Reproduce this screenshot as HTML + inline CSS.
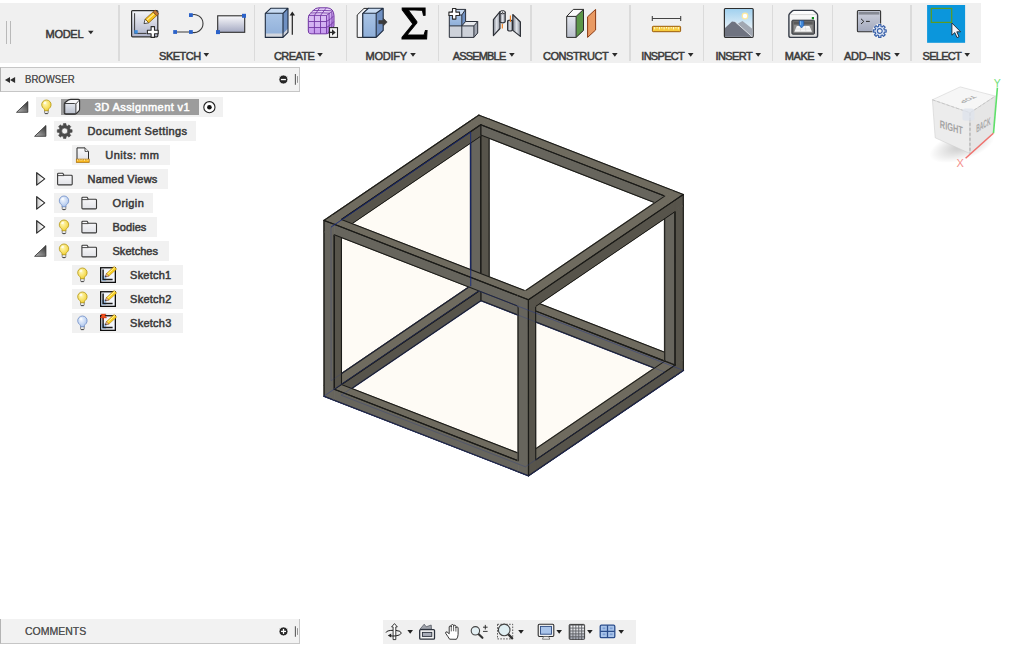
<!DOCTYPE html><html><head><meta charset="utf-8"><title>3D Assignment v1</title><style>
*{box-sizing:border-box;margin:0;padding:0}
html,body{width:1020px;height:648px;overflow:hidden;background:#fff}
body{position:relative;font-family:"Liberation Sans",sans-serif;color:#333}
.abs{position:absolute}
.toolbar{position:absolute;left:0;top:3px;width:981px;height:59.7px;background:#f0f0f0}
.sep{position:absolute;top:5px;width:1.6px;height:55.5px;background:#dbdbdb}
.tl{position:absolute;top:49.8px;font-size:11px;font-weight:normal;-webkit-text-stroke:0.5px #3a3a3a;color:#3a3a3a;white-space:nowrap;line-height:12px}
.ar{position:absolute;width:0;height:0;border-left:2.8px solid transparent;border-right:2.8px solid transparent;border-top:3.8px solid #2a2a2a}
.panelhdr{position:absolute;left:0;width:299.5px;background:#f2f2f2;border:1px solid #c6c6c6;border-left-color:#b4b4b4;font-size:11px;color:#555;line-height:12px;white-space:nowrap}
.panelhdr span{transform-origin:0 50%;text-shadow:0 0 0.4px #555}
.row{position:absolute;height:19.55px;background:#f1f1f1}
.row span{position:absolute;top:4.15px;font-size:11px;font-weight:normal;-webkit-text-stroke:0.5px #3a3a3a;color:#3a3a3a;white-space:nowrap;line-height:12px}
.model{position:absolute;left:0;top:0}
</style></head><body>
<svg class="model" width="1020" height="648" viewBox="0 0 1020 648"><g stroke="#1b1b18" stroke-width="1.1" stroke-linecap="round" stroke-linejoin="round"><polygon points="324.21,396.34 528.52,475.67 683.36,370.39 479.05,291.05" fill="#fefbf5"/>
<polygon points="324.21,396.34 479.05,291.05 478.96,115.14 324.12,220.42" fill="#fefbf5"/>
<polygon points="324.21,396.34 528.52,475.67 683.36,370.39 479.05,291.05" fill="none" stroke="#1f3391" stroke-width="1.6"/>
<polygon points="341.51,395.36 525.41,466.77 664.75,372.02 480.84,300.61" fill="none" stroke="#1f3391" stroke-width="1.6"/>
<polygon points="331.41,380.54 470.75,285.79 470.67,132.13 331.33,226.88" fill="none" stroke="#1f3391" stroke-width="1.6"/>

<polygon points="470.75,285.79 480.84,289.71 480.76,136.05 470.67,132.13" fill="#67655d" stroke="#67655d" stroke-width="1"/><polygon points="480.84,289.71 489.14,284.06 489.06,130.4 480.76,136.05" fill="#57544b" stroke="#57544b" stroke-width="1"/><line x1="470.75" y1="285.79" x2="480.84" y2="289.71"/><line x1="480.84" y1="289.71" x2="480.76" y2="136.05"/><line x1="480.76" y1="136.05" x2="470.67" y2="132.13"/><line x1="470.67" y1="132.13" x2="470.75" y2="285.79"/><line x1="480.84" y1="289.71" x2="489.14" y2="284.06"/><line x1="489.14" y1="284.06" x2="489.06" y2="130.4"/><line x1="480.76" y1="136.05" x2="480.84" y2="289.71"/>
<polygon points="480.84,289.71 664.74,361.12 673.04,355.47 489.14,284.06" fill="#6f6b5f" stroke="#6f6b5f" stroke-width="1"/><polygon points="480.84,300.61 664.75,372.02 664.74,361.12 480.84,289.71" fill="#67655d" stroke="#67655d" stroke-width="1"/><line x1="480.84" y1="289.71" x2="664.74" y2="361.12"/><line x1="664.74" y1="361.12" x2="673.04" y2="355.47"/><line x1="673.04" y1="355.47" x2="489.14" y2="284.06"/><line x1="489.14" y1="284.06" x2="480.84" y2="289.71"/><line x1="480.84" y1="300.61" x2="664.75" y2="372.02"/><line x1="664.75" y1="372.02" x2="664.74" y2="361.12"/><line x1="664.74" y1="361.12" x2="480.84" y2="289.71"/><line x1="480.84" y1="289.71" x2="480.84" y2="300.61"/>
<polygon points="331.41,380.54 341.5,384.45 480.84,289.71 470.75,285.79" fill="#6f6b5f" stroke="#6f6b5f" stroke-width="1"/><polygon points="341.51,395.36 480.84,300.61 480.84,289.71 341.5,384.45" fill="#57544b" stroke="#57544b" stroke-width="1"/><line x1="331.41" y1="380.54" x2="341.5" y2="384.45"/><line x1="341.5" y1="384.45" x2="480.84" y2="289.71"/><line x1="480.84" y1="289.71" x2="470.75" y2="285.79"/><line x1="470.75" y1="285.79" x2="331.41" y2="380.54"/><line x1="341.51" y1="395.36" x2="480.84" y2="300.61"/><line x1="480.84" y1="300.61" x2="480.84" y2="289.71"/><line x1="480.84" y1="289.71" x2="341.5" y2="384.45"/><line x1="341.5" y1="384.45" x2="341.51" y2="395.36"/>
<polygon points="480.76,136.05 489.06,130.4 489.06,129.45 480.76,135.1" fill="#57544b" stroke="#57544b" stroke-width="1"/><line x1="489.06" y1="130.4" x2="489.06" y2="129.45"/><line x1="489.06" y1="129.45" x2="480.76" y2="135.1"/>
<polygon points="470.66,120.78 480.76,124.7 489.06,119.06 478.96,115.14" fill="#6f6b5f" stroke="#6f6b5f" stroke-width="1"/><line x1="489.06" y1="119.06" x2="478.96" y2="115.14"/><line x1="478.96" y1="115.14" x2="470.66" y2="120.78"/>
<polygon points="324.21,396.34 334.31,400.26 334.3,389.35 324.21,385.43" fill="#67655d" stroke="#67655d" stroke-width="1"/><line x1="324.21" y1="396.34" x2="334.31" y2="400.26"/><line x1="324.21" y1="385.43" x2="324.21" y2="396.34"/>
<polygon points="675.06,376.03 683.36,370.39 683.36,359.48 675.06,365.12" fill="#57544b" stroke="#57544b" stroke-width="1"/><line x1="675.06" y1="376.03" x2="683.36" y2="370.39"/><line x1="683.36" y1="370.39" x2="683.36" y2="359.48"/>
<polygon points="341.42,230.79 480.76,136.05 480.76,135.1 341.42,229.84" fill="#57544b" stroke="#57544b" stroke-width="1"/><line x1="341.42" y1="230.79" x2="480.76" y2="136.05"/>
<polygon points="480.76,124.7 664.66,196.11 672.96,190.47 489.06,119.06" fill="#6f6b5f" stroke="#6f6b5f" stroke-width="1"/><polygon points="480.76,135.1 664.66,206.51 664.66,196.11 480.76,124.7" fill="#67655d" stroke="#67655d" stroke-width="1"/><line x1="480.76" y1="124.7" x2="664.66" y2="196.11"/><line x1="672.96" y1="190.47" x2="489.06" y2="119.06"/><line x1="480.76" y1="135.1" x2="664.66" y2="206.51"/><line x1="664.66" y1="206.51" x2="664.66" y2="196.11"/><line x1="664.66" y1="196.11" x2="480.76" y2="124.7"/><line x1="480.76" y1="124.7" x2="480.76" y2="135.1"/>
<polygon points="331.32,215.53 341.42,219.45 480.76,124.7 470.66,120.78" fill="#6f6b5f" stroke="#6f6b5f" stroke-width="1"/><polygon points="341.42,229.84 480.76,135.1 480.76,124.7 341.42,219.45" fill="#57544b" stroke="#57544b" stroke-width="1"/><line x1="341.42" y1="219.45" x2="480.76" y2="124.7"/><line x1="470.66" y1="120.78" x2="331.32" y2="215.53"/><line x1="480.76" y1="135.1" x2="480.76" y2="124.7"/><line x1="480.76" y1="124.7" x2="341.42" y2="219.45"/><line x1="341.42" y1="219.45" x2="341.42" y2="229.84"/>
<polygon points="324.21,385.43 334.3,389.35 334.22,235.69 324.13,231.77" fill="#67655d" stroke="#67655d" stroke-width="1"/><polygon points="334.3,389.35 341.5,384.45 341.42,230.79 334.22,235.69" fill="#57544b" stroke="#57544b" stroke-width="1"/><line x1="334.3" y1="389.35" x2="334.22" y2="235.69"/><line x1="324.13" y1="231.77" x2="324.21" y2="385.43"/><line x1="334.3" y1="389.35" x2="341.5" y2="384.45"/><line x1="341.5" y1="384.45" x2="341.42" y2="230.79"/><line x1="334.22" y1="235.69" x2="334.3" y2="389.35"/>
<polygon points="664.74,361.12 675.06,365.12 674.98,211.46 664.66,207.46" fill="#67655d" stroke="#67655d" stroke-width="1"/><polygon points="675.06,365.12 683.36,359.48 683.28,205.82 674.98,211.46" fill="#57544b" stroke="#57544b" stroke-width="1"/><line x1="664.74" y1="361.12" x2="675.06" y2="365.12"/><line x1="675.06" y1="365.12" x2="674.98" y2="211.46"/><line x1="674.98" y1="211.46" x2="664.66" y2="207.46"/><line x1="664.66" y1="207.46" x2="664.74" y2="361.12"/><line x1="683.36" y1="359.48" x2="683.28" y2="205.82"/><line x1="674.98" y1="211.46" x2="675.06" y2="365.12"/>
<polygon points="334.3,389.35 518.2,460.76 525.4,455.87 341.5,384.45" fill="#6f6b5f" stroke="#6f6b5f" stroke-width="1"/><polygon points="334.31,400.26 518.21,471.67 518.2,460.76 334.3,389.35" fill="#67655d" stroke="#67655d" stroke-width="1"/><line x1="334.3" y1="389.35" x2="518.2" y2="460.76"/><line x1="518.2" y1="460.76" x2="525.4" y2="455.87"/><line x1="525.4" y1="455.87" x2="341.5" y2="384.45"/><line x1="341.5" y1="384.45" x2="334.3" y2="389.35"/><line x1="334.31" y1="400.26" x2="518.21" y2="471.67"/><line x1="518.2" y1="460.76" x2="334.3" y2="389.35"/>
<polygon points="525.4,455.87 535.72,459.87 675.06,365.12 664.74,361.12" fill="#6f6b5f" stroke="#6f6b5f" stroke-width="1"/><polygon points="535.72,470.78 675.06,376.03 675.06,365.12 535.72,459.87" fill="#57544b" stroke="#57544b" stroke-width="1"/><line x1="525.4" y1="455.87" x2="535.72" y2="459.87"/><line x1="535.72" y1="459.87" x2="675.06" y2="365.12"/><line x1="675.06" y1="365.12" x2="664.74" y2="361.12"/><line x1="664.74" y1="361.12" x2="525.4" y2="455.87"/><line x1="535.72" y1="470.78" x2="675.06" y2="376.03"/><line x1="675.06" y1="365.12" x2="535.72" y2="459.87"/>
<polygon points="324.13,231.77 334.22,235.69 334.22,234.74 324.13,230.82" fill="#67655d" stroke="#67655d" stroke-width="1"/><polygon points="334.22,235.69 341.42,230.79 341.42,229.84 334.22,234.74" fill="#57544b" stroke="#57544b" stroke-width="1"/><line x1="334.22" y1="235.69" x2="334.22" y2="234.74"/><line x1="324.13" y1="230.82" x2="324.13" y2="231.77"/><line x1="341.42" y1="229.84" x2="334.22" y2="234.74"/><line x1="334.22" y1="234.74" x2="334.22" y2="235.69"/>
<polygon points="674.98,211.46 683.28,205.82 683.28,204.87 674.98,210.51" fill="#57544b" stroke="#57544b" stroke-width="1"/><line x1="683.28" y1="205.82" x2="683.28" y2="204.87"/>
<polygon points="324.12,220.42 334.22,224.34 341.42,219.45 331.32,215.53" fill="#6f6b5f" stroke="#6f6b5f" stroke-width="1"/><polygon points="324.13,230.82 334.22,234.74 334.22,224.34 324.12,220.42" fill="#67655d" stroke="#67655d" stroke-width="1"/><line x1="324.12" y1="220.42" x2="334.22" y2="224.34"/><line x1="331.32" y1="215.53" x2="324.12" y2="220.42"/><line x1="334.22" y1="224.34" x2="324.12" y2="220.42"/><line x1="324.12" y1="220.42" x2="324.13" y2="230.82"/>
<polygon points="664.66,196.11 674.98,200.12 683.27,194.47 672.96,190.47" fill="#6f6b5f" stroke="#6f6b5f" stroke-width="1"/><polygon points="674.98,210.51 683.28,204.87 683.27,194.47 674.98,200.12" fill="#57544b" stroke="#57544b" stroke-width="1"/><line x1="674.98" y1="200.12" x2="683.27" y2="194.47"/><line x1="683.27" y1="194.47" x2="672.96" y2="190.47"/><line x1="683.28" y1="204.87" x2="683.27" y2="194.47"/><line x1="683.27" y1="194.47" x2="674.98" y2="200.12"/>
<polygon points="518.21,471.67 528.52,475.67 528.52,464.77 518.2,460.76" fill="#67655d" stroke="#67655d" stroke-width="1"/><polygon points="528.52,475.67 535.72,470.78 535.72,459.87 528.52,464.77" fill="#57544b" stroke="#57544b" stroke-width="1"/><line x1="518.21" y1="471.67" x2="528.52" y2="475.67"/><line x1="528.52" y1="475.67" x2="528.52" y2="464.77"/><line x1="528.52" y1="475.67" x2="535.72" y2="470.78"/><line x1="528.52" y1="464.77" x2="528.52" y2="475.67"/>
<polygon points="535.64,306.21 674.98,211.46 674.98,210.51 535.64,305.26" fill="#57544b" stroke="#57544b" stroke-width="1"/><line x1="535.64" y1="306.21" x2="674.98" y2="211.46"/>
<polygon points="334.22,224.34 518.12,295.76 525.32,290.86 341.42,219.45" fill="#6f6b5f" stroke="#6f6b5f" stroke-width="1"/><polygon points="334.22,234.74 518.12,306.15 518.12,295.76 334.22,224.34" fill="#67655d" stroke="#67655d" stroke-width="1"/><line x1="334.22" y1="224.34" x2="518.12" y2="295.76"/><line x1="525.32" y1="290.86" x2="341.42" y2="219.45"/><line x1="334.22" y1="234.74" x2="518.12" y2="306.15"/><line x1="518.12" y1="295.76" x2="334.22" y2="224.34"/>
<polygon points="525.32,290.86 535.64,294.87 674.98,200.12 664.66,196.11" fill="#6f6b5f" stroke="#6f6b5f" stroke-width="1"/><polygon points="535.64,305.26 674.98,210.51 674.98,200.12 535.64,294.87" fill="#57544b" stroke="#57544b" stroke-width="1"/><line x1="535.64" y1="294.87" x2="674.98" y2="200.12"/><line x1="664.66" y1="196.11" x2="525.32" y2="290.86"/><line x1="674.98" y1="200.12" x2="535.64" y2="294.87"/>
<polygon points="518.2,460.76 528.52,464.77 528.44,311.11 518.13,307.1" fill="#67655d" stroke="#67655d" stroke-width="1"/><polygon points="528.52,464.77 535.72,459.87 535.64,306.21 528.44,311.11" fill="#57544b" stroke="#57544b" stroke-width="1"/><line x1="528.52" y1="464.77" x2="528.44" y2="311.11"/><line x1="518.13" y1="307.1" x2="518.2" y2="460.76"/><line x1="535.72" y1="459.87" x2="535.64" y2="306.21"/><line x1="528.44" y1="311.11" x2="528.52" y2="464.77"/>
<polygon points="518.13,307.1 528.44,311.11 528.44,310.16 518.12,306.15" fill="#67655d" stroke="#67655d" stroke-width="1"/><polygon points="528.44,311.11 535.64,306.21 535.64,305.26 528.44,310.16" fill="#57544b" stroke="#57544b" stroke-width="1"/><line x1="528.44" y1="311.11" x2="528.44" y2="310.16"/><line x1="518.12" y1="306.15" x2="518.13" y2="307.1"/><line x1="528.44" y1="310.16" x2="528.44" y2="311.11"/>
<polygon points="518.12,295.76 528.44,299.76 535.64,294.87 525.32,290.86" fill="#6f6b5f" stroke="#6f6b5f" stroke-width="1"/><polygon points="518.12,306.15 528.44,310.16 528.44,299.76 518.12,295.76" fill="#67655d" stroke="#67655d" stroke-width="1"/><polygon points="528.44,310.16 535.64,305.26 535.64,294.87 528.44,299.76" fill="#57544b" stroke="#57544b" stroke-width="1"/><line x1="518.12" y1="295.76" x2="528.44" y2="299.76"/><line x1="528.44" y1="299.76" x2="535.64" y2="294.87"/><line x1="528.44" y1="310.16" x2="528.44" y2="299.76"/><line x1="528.44" y1="299.76" x2="518.12" y2="295.76"/><line x1="535.64" y1="294.87" x2="528.44" y2="299.76"/><line x1="528.44" y1="299.76" x2="528.44" y2="310.16"/>
<polygon points="341.51,395.36 525.41,466.77 664.75,372.02 480.84,300.61" fill="none" stroke="#1f3391" stroke-width="0.9" opacity="0.3"/>
<polygon points="331.41,380.54 470.75,285.79 470.67,132.13 331.33,226.88" fill="none" stroke="#1f3391" stroke-width="0.9" opacity="0.25"/>
<polygon points="324.21,396.34 528.52,475.67 683.36,370.39 479.05,291.05" fill="none" stroke="#1f3391" stroke-width="0.9" opacity="0.45"/>
<polyline points="331.33,226.88 470.67,132.13 470.75,285.79" fill="none" stroke="#12267c" stroke-width="1" opacity="0.75"/></g></svg>
<div class="toolbar"></div>
<div class="abs" style="left:6px;top:21px;width:1px;height:23px;background:#b9b9b9"></div><div class="abs" style="left:10.3px;top:21px;width:1px;height:23px;background:#b9b9b9"></div>
<div class="sep" style="left:118.2px"></div>
<div class="sep" style="left:253.6px"></div>
<div class="sep" style="left:345.8px"></div>
<div class="sep" style="left:437.8px"></div>
<div class="sep" style="left:530.4px"></div>
<div class="sep" style="left:629.4px"></div>
<div class="sep" style="left:702.8px"></div>
<div class="sep" style="left:771.8px"></div>
<div class="sep" style="left:831.6px"></div>
<div class="sep" style="left:910.2px"></div>
<div class="tl" style="left:45.5px;top:28px;letter-spacing:-0.263px">MODEL</div>
<div class="tl" style="left:159.1px;top:49.8px;letter-spacing:-0.519px">SKETCH</div>
<div class="tl" style="left:274px;top:49.8px;letter-spacing:-0.585px">CREATE</div>
<div class="tl" style="left:365.5px;top:49.8px;letter-spacing:-0.246px">MODIFY</div>
<div class="tl" style="left:452.8px;top:49.8px;letter-spacing:-0.839px">ASSEMBLE</div>
<div class="tl" style="left:542.9px;top:49.8px;letter-spacing:-0.406px">CONSTRUCT</div>
<div class="tl" style="left:641.3px;top:49.8px;letter-spacing:-0.711px">INSPECT</div>
<div class="tl" style="left:715.6px;top:49.8px;letter-spacing:-0.625px">INSERT</div>
<div class="tl" style="left:784.7px;top:49.8px;letter-spacing:-0.394px">MAKE</div>
<div class="tl" style="left:843.9px;top:49.8px;letter-spacing:-0.157px">ADD–INS</div>
<div class="tl" style="left:922.6px;top:49.8px;letter-spacing:-0.734px">SELECT</div>
<svg class="abs" style="left:0;top:0" width="1020" height="70" viewBox="0 0 1020 70"><g fill="#2a2a2a"><polygon points="88,30.7 93.6,30.7 90.8,34.3"/><polygon points="203.5,53.1 209.1,53.1 206.3,56.7"/><polygon points="317.2,53.1 322.8,53.1 320,56.7"/><polygon points="410.2,53.1 415.8,53.1 413,56.7"/><polygon points="509.1,53.1 514.7,53.1 511.9,56.7"/><polygon points="612,53.1 617.6,53.1 614.8,56.7"/><polygon points="687.9,53.1 693.5,53.1 690.7,56.7"/><polygon points="755.4,53.1 761,53.1 758.2,56.7"/><polygon points="817.4,53.1 823,53.1 820.2,56.7"/><polygon points="894.2,53.1 899.8,53.1 897,56.7"/><polygon points="964.4,53.1 970,53.1 967.2,56.7"/></g></svg>
<svg class="abs" style="left:0;top:0" width="1020" height="648" viewBox="0 0 1020 648" ><defs>
<linearGradient id="gSk" x1="0" y1="0" x2="0" y2="1"><stop offset="0" stop-color="#f4f5f9"/><stop offset="1" stop-color="#aeb3c9"/></linearGradient>
<linearGradient id="gRc" x1="0" y1="0" x2="0" y2="1"><stop offset="0" stop-color="#fafafc"/><stop offset="1" stop-color="#a4a9c2"/></linearGradient>
<linearGradient id="gBl" x1="0" y1="0" x2="0" y2="1"><stop offset="0" stop-color="#a9c4e6"/><stop offset="1" stop-color="#8eaed8"/></linearGradient>
<linearGradient id="gGr" x1="0" y1="0" x2="0" y2="1"><stop offset="0" stop-color="#e4e7ee"/><stop offset="1" stop-color="#b9bfcc"/></linearGradient>
<linearGradient id="gPl" x1="0" y1="0" x2="1" y2="0"><stop offset="0" stop-color="#7f848f"/><stop offset="0.5" stop-color="#e3e6ec"/><stop offset="1" stop-color="#8a8f9a"/></linearGradient>
<linearGradient id="gSky" x1="0" y1="0" x2="0" y2="1"><stop offset="0" stop-color="#9fd0ef"/><stop offset="0.7" stop-color="#e6f1f8"/><stop offset="1" stop-color="#f2f6f9"/></linearGradient>
<linearGradient id="gWin" x1="0" y1="0" x2="0" y2="1"><stop offset="0" stop-color="#cdd1dc"/><stop offset="1" stop-color="#a3a9bd"/></linearGradient>
<linearGradient id="gPr" x1="0" y1="0" x2="0" y2="1"><stop offset="0" stop-color="#ffffff"/><stop offset="1" stop-color="#dcdcdc"/></linearGradient>
<linearGradient id="gPu" x1="0" y1="0" x2="0" y2="1"><stop offset="0" stop-color="#d9bdf3"/><stop offset="1" stop-color="#b57be8"/></linearGradient>
<linearGradient id="gTc" x1="0" y1="0" x2="1" y2="0"><stop offset="0" stop-color="#c4c4c4"/><stop offset="0.7" stop-color="#fff"/></linearGradient>
<linearGradient id="gFo" x1="0" y1="0" x2="0" y2="1"><stop offset="0" stop-color="#fbfbfc"/><stop offset="1" stop-color="#e2e3e8"/></linearGradient>
<radialGradient id="gBy" cx="0.4" cy="0.35" r="0.7"><stop offset="0" stop-color="#fff9b8"/><stop offset="1" stop-color="#f2cf2e"/></radialGradient>
<radialGradient id="gBb" cx="0.4" cy="0.35" r="0.7"><stop offset="0" stop-color="#f2f7ff"/><stop offset="1" stop-color="#a9c3ec"/></radialGradient>
<linearGradient id="gTri" x1="0" y1="1" x2="1" y2="0"><stop offset="0" stop-color="#bdbdbd"/><stop offset="1" stop-color="#2e2e2e"/></linearGradient>
<radialGradient id="gSh" cx="0.5" cy="0.5" r="0.5"><stop offset="0" stop-color="#000" stop-opacity="0.22"/><stop offset="1" stop-color="#000" stop-opacity="0"/></radialGradient>
</defs><rect x="131.6" y="10.6" width="26.2" height="26.2" rx="1" fill="url(#gSk)" stroke="#2e2e2e" stroke-width="1.2"/>
<path d="M134.6 13.2V33.4H146.5" fill="none" stroke="#3a3a3a" stroke-width="1"/>
<rect x="134.3" y="30.2" width="3.4" height="3.4" fill="#3b8de0"/>
<g transform="translate(144,23.6) rotate(-42)"><polygon points="0,0 4,-2.6 4,2.6" fill="#fff" stroke="#333" stroke-width="0.8"/><rect x="4" y="-2.6" width="10.6" height="5.2" fill="#f6c21c" stroke="#8a5a0a" stroke-width="0.7"/><rect x="14.6" y="-2.6" width="2.8" height="5.2" fill="#c47a3a" stroke="#7a4a1a" stroke-width="0.7"/><line x1="4.5" y1="-0.6" x2="14" y2="-0.6" stroke="#fff3a8" stroke-width="1"/></g>
<polygon points="151.1,26.6 154.5,26.6 154.5,30.3 158.2,30.3 158.2,33.7 154.5,33.7 154.5,37.4 151.1,37.4 151.1,33.7 147.4,33.7 147.4,30.3 151.1,30.3" fill="#fff" stroke="#2a2a2a" stroke-width="1.1" stroke-linejoin="round"/>
<path d="M175.1 32H190.9A9 9 0 1 0 190.9 15.1" fill="none" stroke="#3a3a3a" stroke-width="1.1"/>
<rect x="173.2" y="30.1" width="3.8" height="3.8" fill="#2b62c9"/><rect x="189" y="30.1" width="3.8" height="3.8" fill="#2b62c9"/><rect x="189" y="13.2" width="3.8" height="3.8" fill="#2b62c9"/>
<rect x="217.7" y="15.8" width="27" height="16.5" fill="url(#gRc)" stroke="#2e2e2e" stroke-width="1.1"/>
<rect x="242" y="13.8" width="4" height="4" fill="#2b62c9"/><rect x="216" y="30.1" width="4" height="4" fill="#2b62c9"/>
<polygon points="265.3,13.3 271,8.2 288,8.2 283,13.3" fill="#c9dcf3"/>
<polygon points="283,13.3 288,8.2 288,32.3 283,37.4" fill="#6f90c2"/>
<rect x="265.3" y="13.3" width="17.7" height="24.1" fill="url(#gBl)"/>
<polygon points="265.3,33.6 283,33.6 288,28.4 288,32.3 283,37.4 265.3,37.4" fill="#d2d6de"/>
<path d="M265.3 13.3L271 8.2H288V32.3L283 37.4H265.3Z M265.3 13.3H283V37.4 M283 13.3L288 8.2" fill="none" stroke="#1f2c40" stroke-width="1.1" stroke-linejoin="round"/>
<path d="M292.3 34.8V13.5" stroke="#222" stroke-width="1.2" fill="none"/><polygon points="292.3,11.6 289.6,15.6 295,15.6" fill="#222"/>
<g><path d="M308.3 31V18.5Q308.3 15.5 310.2 13.6L313.8 10Q315.6 7.9 319 7.8H327Q333.6 8.2 334 15.5V25.5Q333.8 29.6 330.6 31.8L328.4 33.2Q327.4 33.8 326 33.8H311Q308.3 33.8 308.3 31Z" fill="url(#gPu)" stroke="#6f35a0" stroke-width="1"/><rect x="309" y="16.1" width="5.1" height="5.1" fill="#ddc3f6" opacity="0.85"/><rect x="309" y="22.1" width="5.1" height="5.1" fill="#ddc3f6" opacity="0.65"/><rect x="309" y="28.1" width="5.1" height="5.1" fill="#ddc3f6" opacity="0.45"/><rect x="315.05" y="16.1" width="5.1" height="5.1" fill="#ddc3f6" opacity="0.85"/><rect x="315.05" y="22.1" width="5.1" height="5.1" fill="#ddc3f6" opacity="0.65"/><rect x="315.05" y="28.1" width="5.1" height="5.1" fill="#ddc3f6" opacity="0.45"/><rect x="321.1" y="16.1" width="5.1" height="5.1" fill="#ddc3f6" opacity="0.85"/><rect x="321.1" y="22.1" width="5.1" height="5.1" fill="#ddc3f6" opacity="0.65"/><rect x="321.1" y="28.1" width="5.1" height="5.1" fill="#ddc3f6" opacity="0.45"/><path d="M309.6 14.6L313.6 10.4Q315.4 8.7 318 8.7H327.2Q331.4 9 332.6 12.2L326.8 15.2Z" fill="#ecdcfb" opacity="0.8"/><path d="M308.6 15.4H326.5V33.4 M308.6 21.5H326.5 M308.6 27.5H326.5 M314.4 15.4V33.6 M320.5 15.4V33.6 M326.5 15.4L332.8 11 M326.5 21.5Q331 19 333.6 16 M326.5 27.5Q331.5 25 333.8 21.6 M314.4 15.4L319.4 8.2 M320.5 15.4L326 8.2 M310.4 13Q320 12.4 330 13.2 M312.6 10.6Q321 10 331.6 10.8 M329 13.6Q329.6 24 329 32.4 M331.8 11.6Q332.4 20 331.6 30.6" fill="none" stroke="#6f35a0" stroke-width="0.85"/></g>
<rect x="329.5" y="27.6" width="8" height="9.8" fill="#f4f4f4" stroke="#2e2e2e" stroke-width="1.1"/><path d="M328.6 32.4H333" stroke="#2a2a2a" stroke-width="1.3"/><polygon points="332,29.3 335.7,32.4 332,35.6" fill="#2a2a2a"/>
<polygon points="357.2,15 364,8.4 368.6,8.4 362.8,13.3 362.8,37.4 357.2,37.4" fill="#f4f5f8" stroke="#2a2a2a" stroke-width="1" stroke-linejoin="round"/>
<polygon points="362.8,13.3 368.6,8.2 383.2,8.2 376.2,13.3" fill="#c9dcf3"/>
<polygon points="376.2,13.3 383.2,8.2 383.2,30.4 376.2,37.4" fill="#6f90c2"/>
<rect x="362.8" y="13.3" width="13.4" height="24.1" fill="url(#gBl)"/>
<path d="M362.8 13.3L368.6 8.2H383.2V30.4L376.2 37.4H362.8Z M362.8 13.3H376.2V37.4 M376.2 13.3L383.2 8.2" fill="none" stroke="#1f2c40" stroke-width="1.1" stroke-linejoin="round"/>
<path d="M378.8 20.5H383.3V18.3L387.2 22.1L383.3 25.9V23.7H378.8Z" fill="#3a3a3a" stroke="#3a3a3a" stroke-width="0.6" stroke-linejoin="round"/>
<text x="414.8" y="38.6" font-family="Liberation Serif, serif" font-size="45.5" text-anchor="middle" fill="#000" stroke="#000" stroke-width="0.9" transform="translate(414.8 0) scale(1.12 1) translate(-414.8 0)">Σ</text>
<polygon points="461.8,25.9 465.6,21.5 477.7,21.5 473.9,25.9" fill="#e9ebef"/><polygon points="473.9,25.9 477.7,21.5 477.7,33 473.9,37.4" fill="#a3a8b3"/>
<rect x="449.3" y="25.9" width="12.5" height="11.5" fill="#cdd1d9"/><rect x="461.8" y="25.9" width="12.1" height="11.5" fill="#cdd1d9"/>
<polygon points="449.3,15 453.5,9.4 465.6,9.4 461.8,15" fill="#c9dcf3"/><polygon points="461.8,15 465.6,9.4 465.6,21.5 461.8,25.9" fill="#6f90c2"/><rect x="449.3" y="15" width="12.5" height="10.9" fill="url(#gBl)"/>
<path d="M449.3 37.4V15L453.5 9.4H465.6V21.5H477.7V33L473.9 37.4Z M449.3 25.9H473.9V37.4 M461.8 15V37.4 M473.9 25.9L477.7 21.5 M461.8 25.9L465.6 21.5 M449.3 15H461.8L465.6 9.4" fill="none" stroke="#2a2f3a" stroke-width="1" stroke-linejoin="round"/>
<polygon points="452.5,8.5 455.9,8.5 455.9,12.1 459.5,12.1 459.5,15.5 455.9,15.5 455.9,19.1 452.5,19.1 452.5,15.5 448.9,15.5 448.9,12.1 452.5,12.1" fill="#fff" stroke="#2a2a2a" stroke-width="1.1" stroke-linejoin="round"/>
<polygon points="493.4,19.6 500,11.6 500,28.5 493.4,35.6" fill="url(#gPl)" stroke="#2c2f36" stroke-width="1.15" stroke-linejoin="round"/>
<path d="M500 12.3V21.6A2.6 1.2 0 0 0 505.2 21.6V12.3Z" fill="url(#gPl)" stroke="#2c2f36" stroke-width="1.15"/><ellipse cx="502.6" cy="12.2" rx="2.6" ry="1.6" fill="#f2f3f6" stroke="#2c2f36" stroke-width="1"/><circle cx="502.6" cy="12.2" r="0.6" fill="#222"/>
<polygon points="512.8,14.5 520.4,22 520.4,36.4 512.8,30.4" fill="url(#gPl)" stroke="#2c2f36" stroke-width="1.15" stroke-linejoin="round"/>
<path d="M507.6 21.5V29.8A2.4 1.2 0 0 0 512.4 29.8V21.5A2.4 1.4 0 0 0 507.6 21.5Z" fill="url(#gPl)" stroke="#2c2f36" stroke-width="1.15"/>
<path d="M502.3 24V28.6 M510.4 15.6V22" stroke="#f07a14" stroke-width="1.1"/>
<polygon points="566.7,16.4 573.3,9.4 583.5,9.4 576.1,16.4" fill="#fafafa"/><polygon points="576.1,16.4 583.5,9.4 583.5,30.4 576.1,37.4" fill="#5b9648"/><rect x="566.7" y="16.4" width="9.4" height="21" fill="url(#gGr)"/>
<path d="M566.7 16.4L573.3 9.4H583.5V30.4L576.1 37.4H566.7Z M566.7 16.4H576.1V37.4 M576.1 16.4L583.5 9.4" fill="none" stroke="#2a2a2a" stroke-width="1" stroke-linejoin="round"/>
<polygon points="587.6,16.8 595.6,9.4 595.6,30 587.6,37.4" fill="#e99a63" stroke="#8a3a12" stroke-width="1" stroke-linejoin="round"/>
<path d="M652.3 18.5H680.7 M652.3 16V21 M680.7 16V21" stroke="#444" stroke-width="1.1" fill="none"/>
<rect x="652.4" y="26.3" width="28.2" height="5.4" rx="0.8" fill="#f6cb3c" stroke="#9a5a0c" stroke-width="1"/>
<path d="M654.70 27V29.4 M657.06 27V28.4 M659.42 27V29.4 M661.78 27V28.4 M664.14 27V29.4 M666.50 27V28.4 M668.86 27V29.4 M671.22 27V28.4 M673.58 27V29.4 M675.94 27V28.4 M678.30 27V29.4" stroke="#fffbe6" stroke-width="0.9" fill="none"/>
<rect x="724.4" y="8.5" width="28.8" height="28.8" rx="1" fill="url(#gSky)" stroke="#2e2e2e" stroke-width="1.2"/>
<polygon points="738,23.5 742.5,21 752.6,29 752.6,36.7 744,36.7" fill="#a1a7b2"/>
<polygon points="725,28 732,21.6 735.4,22 752,36.7 725,36.7" fill="#6f7380"/>
<path d="M735.4 22L752 36.7" stroke="#eef0f3" stroke-width="0.8"/>
<circle cx="745" cy="16" r="3.4" fill="#fde9a0"/><circle cx="745" cy="16" r="2.2" fill="#fff"/>
<path d="M788.9 15.6Q788.9 14.4 789.7 13.6L792 11.2Q792.8 10.4 794 10.4H812.4Q813.6 10.4 814.4 11.2L816.8 13.6Q817.6 14.4 817.6 15.6V35.4Q817.6 37.4 815.6 37.4H790.9Q788.9 37.4 788.9 35.4Z" fill="url(#gPr)" stroke="#363c48" stroke-width="1.4" stroke-linejoin="round"/>
<path d="M790 14.6H816.6" stroke="#c9c9c9" stroke-width="0.7"/>
<rect x="791.9" y="20.2" width="22.6" height="14" rx="1" fill="#676767" stroke="#34373e" stroke-width="1"/>
<rect x="793.7" y="21.6" width="19" height="11.2" fill="#8c8c8c"/><rect x="793.7" y="21.6" width="19" height="3" fill="#5a5a5a"/>
<polygon points="796.8,26 809.4,26 812,31.8 794.4,31.8" fill="#f6f6f6"/>
<path d="M795.6 29H810.8 M801 26L800.2 31.8 M805.2 26L806 31.8" stroke="#d4d4d4" stroke-width="0.6" fill="none"/>
<path d="M799.3 20.8H803.8V25.4L801.55 28L799.3 25.4Z" fill="#3e86d8" stroke="#1e4e98" stroke-width="0.6"/><path d="M800.6 21.2V25" stroke="#9cc6f2" stroke-width="0.8"/>
<rect x="811.8" y="17" width="2.2" height="2.2" fill="#0a8a1a"/>
<rect x="857.4" y="10.5" width="23.2" height="21.2" rx="1" fill="url(#gWin)" stroke="#333" stroke-width="1.1"/>
<rect x="858.6" y="11.8" width="20.8" height="2.8" fill="#868a94"/>
<path d="M861 18.8L863.8 21.4L861 24 M866 21.4H869.8" fill="none" stroke="#2a2a2a" stroke-width="1"/>
<circle cx="879.8" cy="31" r="7.4" fill="#f0f0f0"/>
<path d="M886.20 29.88 L886.20 32.12 L884.35 32.17 L883.85 33.39 L885.12 34.74 L883.54 36.32 L882.19 35.05 L880.97 35.55 L880.92 37.40 L878.68 37.40 L878.63 35.55 L877.41 35.05 L876.06 36.32 L874.48 34.74 L875.75 33.39 L875.25 32.17 L873.40 32.12 L873.40 29.88 L875.25 29.83 L875.75 28.61 L874.48 27.26 L876.06 25.68 L877.41 26.95 L878.63 26.45 L878.68 24.60 L880.92 24.60 L880.97 26.45 L882.19 26.95 L883.54 25.68 L885.12 27.26 L883.85 28.61 L884.35 29.83Z M882.20 31.00 A2.40 2.40 0 1 0 877.40 31.00 A2.40 2.40 0 1 0 882.20 31.00 Z" fill="#dfe8f7" stroke="#3b62aa" stroke-width="1.2" fill-rule="evenodd" stroke-linejoin="round"/>
<rect x="927.1" y="5" width="38" height="37.8" fill="#0b96dc"/>
<rect x="931.3" y="8.4" width="20.4" height="14" fill="none" stroke="#5d9b20" stroke-width="1.2"/>
<path d="M951.9 23V35.2L954.8 32.6L957 37.6L959 36.7L956.8 31.8H960.6Z" fill="#f4f6fa" stroke="#1e2630" stroke-width="0.9" stroke-linejoin="round"/></svg>
<div class="panelhdr" style="top:67px;height:24.8px"><span class="abs" style="left:24.4px;top:4.6px;transform:scaleX(0.873)">BROWSER</span></div>
<svg class="abs" style="left:0;top:0" width="1020" height="648" viewBox="0 0 1020 648" ><polygon points="4.9,79.9 10,76.9 10,82.9" fill="#2e2e2e"/><polygon points="10,79.9 15.1,76.9 15.1,82.9" fill="#2e2e2e"/><circle cx="283.4" cy="79.5" r="4.5" fill="#262626" stroke="#fff" stroke-width="0.8"/><rect x="280.9" y="78.9" width="5" height="1.3" fill="#fff"/><path d="M295.4 74.1V84.7" stroke="#5c5c5c" stroke-width="1.1"/><path d="M297.5 76.1V82.8" stroke="#8a8a8a" stroke-width="0.9"/></svg>
<div class="row" style="left:35.8px;top:97.15px;width:187.7px"></div>
<div class="row" style="left:60.7px;top:98.95px;width:138.1px;height:15.8px;background:#9c9c9c"><span style="left:34.1px;top:2.45px;color:#fff;-webkit-text-stroke:0.5px #fff;letter-spacing:0.414px">3D Assignment v1</span></div>
<div class="row" style="left:54.1px;top:121.15px;width:141.7px"><span style="left:33.4px;letter-spacing:0.415px">Document Settings</span></div>
<div class="row" style="left:71.8px;top:145.15px;width:98.1px"><span style="left:33.4px;letter-spacing:0.533px">Units: mm</span></div>
<div class="row" style="left:54.1px;top:169.15px;width:113.7px"><span style="left:33.4px;letter-spacing:0.221px">Named Views</span></div>
<div class="row" style="left:54.1px;top:193.15px;width:98.8px"><span style="left:58.4px;letter-spacing:0.390px">Origin</span></div>
<div class="row" style="left:54.1px;top:217.15px;width:102.8px"><span style="left:58.4px;letter-spacing:0.044px">Bodies</span></div>
<div class="row" style="left:54.1px;top:241.15px;width:114.6px"><span style="left:58.4px;letter-spacing:0.043px">Sketches</span></div>
<div class="row" style="left:71.8px;top:265.15px;width:111px"><span style="left:58.3px;letter-spacing:0.207px">Sketch1</span></div>
<div class="row" style="left:71.8px;top:289.15px;width:111px"><span style="left:58.3px;letter-spacing:0.235px">Sketch2</span></div>
<div class="row" style="left:71.8px;top:313.15px;width:111px"><span style="left:58.3px;letter-spacing:0.235px">Sketch3</span></div>
<svg class="abs" style="left:0;top:0" width="1020" height="648" viewBox="0 0 1020 648" ><polygon points="16.5,112.3 27.8,112.3 27.8,101.5" fill="url(#gTri)" stroke="#2a2a2a" stroke-width="0.8" stroke-linejoin="round"/><rect x="44.6" y="109.3" width="3.6" height="4.4" rx="0.9" fill="#ececec" stroke="#5a5a5a" stroke-width="0.7"/><path d="M45.1 113.5h2.6" stroke="#444" stroke-width="0.9"/><path d="M43.8 108.6A4.7 4.7 0 1 1 49 108.6Q48.2 109.5 48.2 110.7H44.6Q44.6 109.5 43.8 108.6Z" fill="url(#gBy)" stroke="#b39512" stroke-width="0.8"/><ellipse cx="45" cy="102.9" rx="1.5" ry="1.1" fill="#fff" opacity="0.75" transform="rotate(-30 45 102.9)"/><path d="M64.3 104.1Q64.3 103.1 65.4 102.3L68.4 100Q69.4 99.4 70.8 99.4H78.4Q79.6 99.4 79.6 100.6V109.3Q79.6 110.3 78.8 111.1L76.4 113.5Q75.6 114.1 74.4 114.1H65.8Q64.3 114.1 64.3 112.7Z" fill="#f7f7f9" stroke="#2e2e2e" stroke-width="1.1" stroke-linejoin="round"/><path d="M64.8 103.5H74.4Q75.9 103.5 75.9 104.7V113.7H66Q64.8 113.7 64.8 112.5Z" fill="url(#gGr)" stroke="#2e2e2e" stroke-width="0.9" stroke-linejoin="round"/><path d="M75.9 104L79.3 100.1" fill="none" stroke="#2e2e2e" stroke-width="0.8"/><circle cx="209.4" cy="107.2" r="5.6" fill="#fff" stroke="#222" stroke-width="1.1"/><circle cx="209.4" cy="107.2" r="2.3" fill="#111"/><polygon points="34.6,136.3 45.9,136.3 45.9,125.5" fill="url(#gTri)" stroke="#2a2a2a" stroke-width="0.8" stroke-linejoin="round"/><path d="M72.09 129.71 L72.09 132.29 L70.22 132.42 L69.61 133.90 L70.84 135.31 L69.01 137.14 L67.60 135.91 L66.12 136.52 L65.99 138.39 L63.41 138.39 L63.28 136.52 L61.80 135.91 L60.39 137.14 L58.56 135.31 L59.79 133.90 L59.18 132.42 L57.31 132.29 L57.31 129.71 L59.18 129.58 L59.79 128.10 L58.56 126.69 L60.39 124.86 L61.80 126.09 L63.28 125.48 L63.41 123.61 L65.99 123.61 L66.12 125.48 L67.60 126.09 L69.01 124.86 L70.84 126.69 L69.61 128.10 L70.22 129.58Z M67.70 131.00 A3.00 3.00 0 1 0 61.70 131.00 A3.00 3.00 0 1 0 67.70 131.00 Z" fill="#4a4a4a" stroke="#4a4a4a" stroke-width="0.6" fill-rule="evenodd" stroke-linejoin="round"/><path d="M77 159.5V147.9H85L88.5 151.4V159.5Z" fill="url(#gFo)" stroke="#2a2a2a" stroke-width="1" stroke-linejoin="round"/><path d="M85 147.9V151.4H88.5" fill="#fff" stroke="#2a2a2a" stroke-width="0.8" stroke-linejoin="round"/><rect x="76.3" y="159.1" width="12.9" height="3.3" fill="#f4b41e" stroke="#a86c08" stroke-width="0.7"/><path d="M77.60 159.3v1.6 M79.32 159.3v1 M81.04 159.3v1.6 M82.76 159.3v1 M84.48 159.3v1.6 M86.20 159.3v1 M87.92 159.3v1.6" stroke="#fff7d6" stroke-width="0.7" fill="none"/><polygon points="36.7,172.7 44.7,178.9 36.7,185.1" fill="url(#gTc)" stroke="#2a2a2a" stroke-width="1.2" stroke-linejoin="round"/><path d="M57.6 183.9V174.1Q57.6 173.2 58.5 173.2H62.8L64 175.3H71.3Q72.2 175.3 72.2 176.2V184Q72.2 184.9 71.3 184.9H58.5Q57.6 184.9 57.6 184Z" fill="url(#gFo)" stroke="#3a3a3a" stroke-width="1.1" stroke-linejoin="round"/><path d="M57.6 175.6H64" fill="none" stroke="#3a3a3a" stroke-width="0.9"/><polygon points="36.7,196.7 44.7,202.9 36.7,209.1" fill="url(#gTc)" stroke="#2a2a2a" stroke-width="1.2" stroke-linejoin="round"/><rect x="62.2" y="205.3" width="3.6" height="4.4" rx="0.9" fill="#ececec" stroke="#5a5a5a" stroke-width="0.7"/><path d="M62.7 209.5h2.6" stroke="#444" stroke-width="0.9"/><path d="M61.4 204.6A4.7 4.7 0 1 1 66.6 204.6Q65.8 205.5 65.8 206.7H62.2Q62.2 205.5 61.4 204.6Z" fill="url(#gBb)" stroke="#6c8cc6" stroke-width="0.8"/><ellipse cx="62.6" cy="198.9" rx="1.5" ry="1.1" fill="#fff" opacity="0.75" transform="rotate(-30 62.6 198.9)"/><path d="M81.9 207.9V198.1Q81.9 197.2 82.8 197.2H87.1L88.3 199.3H95.6Q96.5 199.3 96.5 200.2V208Q96.5 208.9 95.6 208.9H82.8Q81.9 208.9 81.9 208Z" fill="url(#gFo)" stroke="#3a3a3a" stroke-width="1.1" stroke-linejoin="round"/><path d="M81.9 199.6H88.3" fill="none" stroke="#3a3a3a" stroke-width="0.9"/><polygon points="36.7,220.7 44.7,226.9 36.7,233.1" fill="url(#gTc)" stroke="#2a2a2a" stroke-width="1.2" stroke-linejoin="round"/><rect x="62.2" y="229.3" width="3.6" height="4.4" rx="0.9" fill="#ececec" stroke="#5a5a5a" stroke-width="0.7"/><path d="M62.7 233.5h2.6" stroke="#444" stroke-width="0.9"/><path d="M61.4 228.6A4.7 4.7 0 1 1 66.6 228.6Q65.8 229.5 65.8 230.7H62.2Q62.2 229.5 61.4 228.6Z" fill="url(#gBy)" stroke="#b39512" stroke-width="0.8"/><ellipse cx="62.6" cy="222.9" rx="1.5" ry="1.1" fill="#fff" opacity="0.75" transform="rotate(-30 62.6 222.9)"/><path d="M81.9 231.9V222.1Q81.9 221.2 82.8 221.2H87.1L88.3 223.3H95.6Q96.5 223.3 96.5 224.2V232Q96.5 232.9 95.6 232.9H82.8Q81.9 232.9 81.9 232Z" fill="url(#gFo)" stroke="#3a3a3a" stroke-width="1.1" stroke-linejoin="round"/><path d="M81.9 223.6H88.3" fill="none" stroke="#3a3a3a" stroke-width="0.9"/><polygon points="34.6,256.3 45.9,256.3 45.9,245.5" fill="url(#gTri)" stroke="#2a2a2a" stroke-width="0.8" stroke-linejoin="round"/><rect x="62.2" y="253.3" width="3.6" height="4.4" rx="0.9" fill="#ececec" stroke="#5a5a5a" stroke-width="0.7"/><path d="M62.7 257.5h2.6" stroke="#444" stroke-width="0.9"/><path d="M61.4 252.6A4.7 4.7 0 1 1 66.6 252.6Q65.8 253.5 65.8 254.7H62.2Q62.2 253.5 61.4 252.6Z" fill="url(#gBy)" stroke="#b39512" stroke-width="0.8"/><ellipse cx="62.6" cy="246.9" rx="1.5" ry="1.1" fill="#fff" opacity="0.75" transform="rotate(-30 62.6 246.9)"/><path d="M81.9 255.9V246.1Q81.9 245.2 82.8 245.2H87.1L88.3 247.3H95.6Q96.5 247.3 96.5 248.2V256Q96.5 256.9 95.6 256.9H82.8Q81.9 256.9 81.9 256Z" fill="url(#gFo)" stroke="#3a3a3a" stroke-width="1.1" stroke-linejoin="round"/><path d="M81.9 247.6H88.3" fill="none" stroke="#3a3a3a" stroke-width="0.9"/><rect x="80.6" y="277.3" width="3.6" height="4.4" rx="0.9" fill="#ececec" stroke="#5a5a5a" stroke-width="0.7"/><path d="M81.1 281.5h2.6" stroke="#444" stroke-width="0.9"/><path d="M79.8 276.6A4.7 4.7 0 1 1 85 276.6Q84.2 277.5 84.2 278.7H80.6Q80.6 277.5 79.8 276.6Z" fill="url(#gBy)" stroke="#b39512" stroke-width="0.8"/><ellipse cx="81" cy="270.9" rx="1.5" ry="1.1" fill="#fff" opacity="0.75" transform="rotate(-30 81 270.9)"/><rect x="100.65" y="267.75" width="14.7" height="14.6" fill="#f3f6fb" stroke="#0e0e0e" stroke-width="1.3"/><rect x="101.6" y="275.6" width="4.6" height="5.2" fill="#8fbdf0" opacity="0.8"/><path d="M103.1 269.6V279.6H112.6" fill="none" stroke="#1c1c1c" stroke-width="1.5"/><g transform="translate(105.2,277) rotate(-42)"><polygon points="0,0 3.4,-1.9 3.4,1.9" fill="#e8b89a" stroke="#6a3a1a" stroke-width="0.5"/><polygon points="0,0 1.3,-0.75 1.3,0.75" fill="#222"/><rect x="3.4" y="-1.8" width="10.4" height="3.6" fill="#f8cf1e" stroke="#b07a08" stroke-width="0.5"/><line x1="3.6" y1="-0.6" x2="13.6" y2="-0.6" stroke="#fff2a0" stroke-width="0.9"/></g><rect x="80.6" y="301.3" width="3.6" height="4.4" rx="0.9" fill="#ececec" stroke="#5a5a5a" stroke-width="0.7"/><path d="M81.1 305.5h2.6" stroke="#444" stroke-width="0.9"/><path d="M79.8 300.6A4.7 4.7 0 1 1 85 300.6Q84.2 301.5 84.2 302.7H80.6Q80.6 301.5 79.8 300.6Z" fill="url(#gBy)" stroke="#b39512" stroke-width="0.8"/><ellipse cx="81" cy="294.9" rx="1.5" ry="1.1" fill="#fff" opacity="0.75" transform="rotate(-30 81 294.9)"/><rect x="100.65" y="291.75" width="14.7" height="14.6" fill="#f3f6fb" stroke="#0e0e0e" stroke-width="1.3"/><rect x="101.6" y="299.6" width="4.6" height="5.2" fill="#8fbdf0" opacity="0.8"/><path d="M103.1 293.6V303.6H112.6" fill="none" stroke="#1c1c1c" stroke-width="1.5"/><g transform="translate(105.2,301) rotate(-42)"><polygon points="0,0 3.4,-1.9 3.4,1.9" fill="#e8b89a" stroke="#6a3a1a" stroke-width="0.5"/><polygon points="0,0 1.3,-0.75 1.3,0.75" fill="#222"/><rect x="3.4" y="-1.8" width="10.4" height="3.6" fill="#f8cf1e" stroke="#b07a08" stroke-width="0.5"/><line x1="3.6" y1="-0.6" x2="13.6" y2="-0.6" stroke="#fff2a0" stroke-width="0.9"/></g><rect x="80.6" y="325.3" width="3.6" height="4.4" rx="0.9" fill="#ececec" stroke="#5a5a5a" stroke-width="0.7"/><path d="M81.1 329.5h2.6" stroke="#444" stroke-width="0.9"/><path d="M79.8 324.6A4.7 4.7 0 1 1 85 324.6Q84.2 325.5 84.2 326.7H80.6Q80.6 325.5 79.8 324.6Z" fill="url(#gBb)" stroke="#6c8cc6" stroke-width="0.8"/><ellipse cx="81" cy="318.9" rx="1.5" ry="1.1" fill="#fff" opacity="0.75" transform="rotate(-30 81 318.9)"/><rect x="100.65" y="315.75" width="14.7" height="14.6" fill="#f3f6fb" stroke="#0e0e0e" stroke-width="1.3"/><rect x="101.6" y="323.6" width="4.6" height="5.2" fill="#8fbdf0" opacity="0.8"/><path d="M103.1 317.6V327.6H112.6" fill="none" stroke="#1c1c1c" stroke-width="1.5"/><g transform="translate(105.2,325) rotate(-42)"><polygon points="0,0 3.4,-1.9 3.4,1.9" fill="#e8b89a" stroke="#6a3a1a" stroke-width="0.5"/><polygon points="0,0 1.3,-0.75 1.3,0.75" fill="#222"/><rect x="3.4" y="-1.8" width="10.4" height="3.6" fill="#f8cf1e" stroke="#b07a08" stroke-width="0.5"/><line x1="3.6" y1="-0.6" x2="13.6" y2="-0.6" stroke="#fff2a0" stroke-width="0.9"/></g><path d="M100.7 314.1h5.4l-1.3 1.5 1.9 2.3h-6.6l1.9-2.3z" fill="#f0531c" stroke="#c2260e" stroke-width="0.4"/><path d="M103.4 318v2" stroke="#c2260e" stroke-width="0.8"/></svg>
<div class="panelhdr" style="top:619.1px;height:24.7px;border-top:none"><span class="abs" style="left:24.4px;top:6.2px;transform:scaleX(0.954)">COMMENTS</span></div>
<svg class="abs" style="left:0;top:0" width="1020" height="648" viewBox="0 0 1020 648" ><circle cx="283.5" cy="631.4" r="4.5" fill="#262626" stroke="#fff" stroke-width="0.8"/><rect x="281" y="630.75" width="5" height="1.3" fill="#fff"/><rect x="282.85" y="628.9" width="1.3" height="5" fill="#fff"/><path d="M295.4 626.2V636.8" stroke="#5c5c5c" stroke-width="1.1"/><path d="M297.5 628.2V634.9" stroke="#8a8a8a" stroke-width="0.9"/></svg>
<div class="abs" style="left:383px;top:620.1px;width:253px;height:23.6px;background:#f0f0f0"></div>
<svg class="abs" style="left:0;top:0" width="1020" height="648" viewBox="0 0 1020 648" ><path d="M386 632.6Q386.6 630.4 393.1 630.3 M395.8 630.4Q401.2 630.8 401.3 633.1Q400.6 635.4 395.8 635.9" fill="none" stroke="#222" stroke-width="1"/><path d="M393.1 626.9H391.6L394.5 623.6L397.3 626.9H395.8V639.6H393.1Z" fill="#fff" stroke="#222" stroke-width="0.9" stroke-linejoin="round"/><path d="M395.8 635.9Q392.5 636.2 390.4 635.8" fill="none" stroke="#222" stroke-width="1"/><polygon points="387.8,635.5 391.2,633.5 391.2,637.6" fill="#222"/><polygon points="407.4,630 413,630 410.2,633.7" fill="#222"/><path d="M420 629.2L424.2 624.2L426.2 626.8L431.2 625L431.5 629.2Z" fill="#9fa3ab" stroke="#4a4f59" stroke-width="0.7" stroke-linejoin="round"/><rect x="419.7" y="629.6" width="14.8" height="9.6" rx="1" fill="#f6f6f6" stroke="#2c323c" stroke-width="1.3"/><rect x="422.4" y="632.4" width="9.4" height="4" fill="#a9adb8" stroke="#2c323c" stroke-width="0.9"/><path d="M449.6 639.2Q447.8 636.4 445.6 633.2Q445.4 631.6 447 631.8L449.2 633.8V627Q449.3 625.9 450.3 625.9Q451.2 625.9 451.3 627V625.6Q451.4 624.5 452.5 624.5Q453.5 624.5 453.6 625.6V626.2Q453.7 625.2 454.7 625.2Q455.8 625.2 455.9 626.4V627.8Q456 626.9 457 626.9Q458 626.9 458.1 628V634.4Q458 637.4 456.4 639.3Z" fill="#fff" stroke="#222" stroke-width="0.9" stroke-linejoin="round"/><path d="M451.3 627V631.4 M453.6 626V631.2 M455.9 627.4V631.6" stroke="#222" stroke-width="0.7" fill="none"/><path d="M478.2 633.8L482.4 637.8" stroke="#333" stroke-width="2.2" stroke-linecap="round"/><circle cx="475.4" cy="630.8" r="4.2" fill="#e4f0f4" stroke="#444" stroke-width="1.1"/><path d="M483 627.2H487.6 M485.3 624.9V629.5 M483 631.4H487.6" stroke="#222" stroke-width="0.9"/><rect x="497.5" y="624.3" width="15.2" height="14.6" fill="none" stroke="#333" stroke-width="0.8" stroke-dasharray="1.6 1.3"/><path d="M508 634L512 638.2" stroke="#333" stroke-width="2.4" stroke-linecap="round"/><circle cx="504.2" cy="629.9" r="5.8" fill="#dfeef2" stroke="#444" stroke-width="1.1"/><polygon points="518.2,630 523.8,630 521,633.7" fill="#222"/><rect x="538.2" y="624.3" width="15.6" height="12.2" rx="1.2" fill="#f2f2f2" stroke="#2e2e2e" stroke-width="1.1"/><rect x="540.5" y="626.4" width="11" height="7.8" fill="#a9c4ea" stroke="#2c4a82" stroke-width="0.9"/><path d="M543.6 636.6L542.4 639.2H549.8L548.6 636.6Z" fill="#f4f4f4" stroke="#555" stroke-width="0.7"/><polygon points="556.4,630 562,630 559.2,633.7" fill="#222"/><rect x="569.2" y="624.4" width="15.4" height="15" rx="1" fill="#5f6166" stroke="#3a3a3a" stroke-width="1"/><rect x="570.5" y="625.6" width="2" height="2" fill="#f4f4f6"/><rect x="570.5" y="628.5" width="2" height="2" fill="#e6e7ea"/><rect x="570.5" y="631.4" width="2" height="2" fill="#d2d4d9"/><rect x="570.5" y="634.3" width="2" height="2" fill="#b9bcc4"/><rect x="570.5" y="637.2" width="2" height="2" fill="#a3a7b2"/><rect x="573.4" y="625.6" width="2" height="2" fill="#f4f4f6"/><rect x="573.4" y="628.5" width="2" height="2" fill="#e6e7ea"/><rect x="573.4" y="631.4" width="2" height="2" fill="#d2d4d9"/><rect x="573.4" y="634.3" width="2" height="2" fill="#b9bcc4"/><rect x="573.4" y="637.2" width="2" height="2" fill="#a3a7b2"/><rect x="576.3" y="625.6" width="2" height="2" fill="#f4f4f6"/><rect x="576.3" y="628.5" width="2" height="2" fill="#e6e7ea"/><rect x="576.3" y="631.4" width="2" height="2" fill="#d2d4d9"/><rect x="576.3" y="634.3" width="2" height="2" fill="#b9bcc4"/><rect x="576.3" y="637.2" width="2" height="2" fill="#a3a7b2"/><rect x="579.2" y="625.6" width="2" height="2" fill="#f4f4f6"/><rect x="579.2" y="628.5" width="2" height="2" fill="#e6e7ea"/><rect x="579.2" y="631.4" width="2" height="2" fill="#d2d4d9"/><rect x="579.2" y="634.3" width="2" height="2" fill="#b9bcc4"/><rect x="579.2" y="637.2" width="2" height="2" fill="#a3a7b2"/><rect x="582.1" y="625.6" width="2" height="2" fill="#f4f4f6"/><rect x="582.1" y="628.5" width="2" height="2" fill="#e6e7ea"/><rect x="582.1" y="631.4" width="2" height="2" fill="#d2d4d9"/><rect x="582.1" y="634.3" width="2" height="2" fill="#b9bcc4"/><rect x="582.1" y="637.2" width="2" height="2" fill="#a3a7b2"/><polygon points="587.1,630 592.7,630 589.9,633.7" fill="#222"/><rect x="600.2" y="625.2" width="14.6" height="12.4" rx="1.2" fill="#a9c4ea" stroke="#2b4d8c" stroke-width="1.3"/><path d="M607.5 625.2V637.6 M600.2 631.4H614.8" stroke="#2b4d8c" stroke-width="1.3"/><rect x="602.6" y="627.4" width="2.8" height="1.8" fill="#7d9fd4"/><rect x="609.8" y="627.4" width="2.8" height="1.8" fill="#7d9fd4"/><rect x="602.6" y="633.4" width="2.8" height="1.8" fill="#7d9fd4"/><rect x="609.8" y="633.4" width="2.8" height="1.8" fill="#7d9fd4"/><polygon points="618.4,630 624,630 621.2,633.7" fill="#222"/></svg>
<svg class="abs" style="left:0;top:0" width="1020" height="648" viewBox="0 0 1020 648" ><ellipse cx="962" cy="146" rx="34" ry="14" fill="url(#gSh)" transform="rotate(-18 962 146)"/><polygon points="932.4,99.8 960.2,86.9 995.4,96.1 970,112.8" fill="#f6f6f6" stroke="#d4d4d4" stroke-width="0.6"/><polygon points="932.4,99.8 970,112.8 970,153.5 935.2,137.8" fill="#ececec" stroke="#d0d0d0" stroke-width="0.6"/><polygon points="970,112.8 995.4,96.1 993.1,133.1 970,153.5" fill="#e6e6e6" stroke="#d0d0d0" stroke-width="0.6"/><path d="M970 112.8V153.5" stroke="#9a9a9a" stroke-width="0.8" stroke-dasharray="3 2"/><path d="M932.4 99.8L970 112.8L995.4 96.1" stroke="#bdbdbd" stroke-width="0.7" fill="none" stroke-dasharray="3 2"/><rect x="962.4" y="108.4" width="12" height="12.4" rx="3" fill="#dfe3ec" opacity="0.8"/><text transform="matrix(0.66 0.2 0 1 939.8 127.7)" font-family="Liberation Sans, sans-serif" font-size="11.2" font-weight="bold" fill="#a4a4a4">RIGHT</text><text transform="matrix(0.45 -0.27 0 1 976.2 132.8)" font-family="Liberation Sans, sans-serif" font-size="11" font-weight="bold" fill="#a8a8a8">BACK</text><text transform="matrix(-0.8 0.36 -0.7 -0.3 973 95.2)" font-family="Liberation Sans, sans-serif" font-size="8.6" font-weight="bold" fill="#ababab">TOP</text><path d="M997.4 87.6L993.5 133.2" stroke="#5fe06a" stroke-width="1.6"/><path d="M993.4 133.2L965.6 158.2" stroke="#f0716d" stroke-width="1.5"/><text x="997.2" y="87" font-family="Liberation Sans, sans-serif" font-size="10.5" fill="#6fe07a" text-anchor="middle">Y</text><text x="960.2" y="167.4" font-family="Liberation Sans, sans-serif" font-size="11" fill="#f48f8c" text-anchor="middle">X</text></svg>
</body></html>
